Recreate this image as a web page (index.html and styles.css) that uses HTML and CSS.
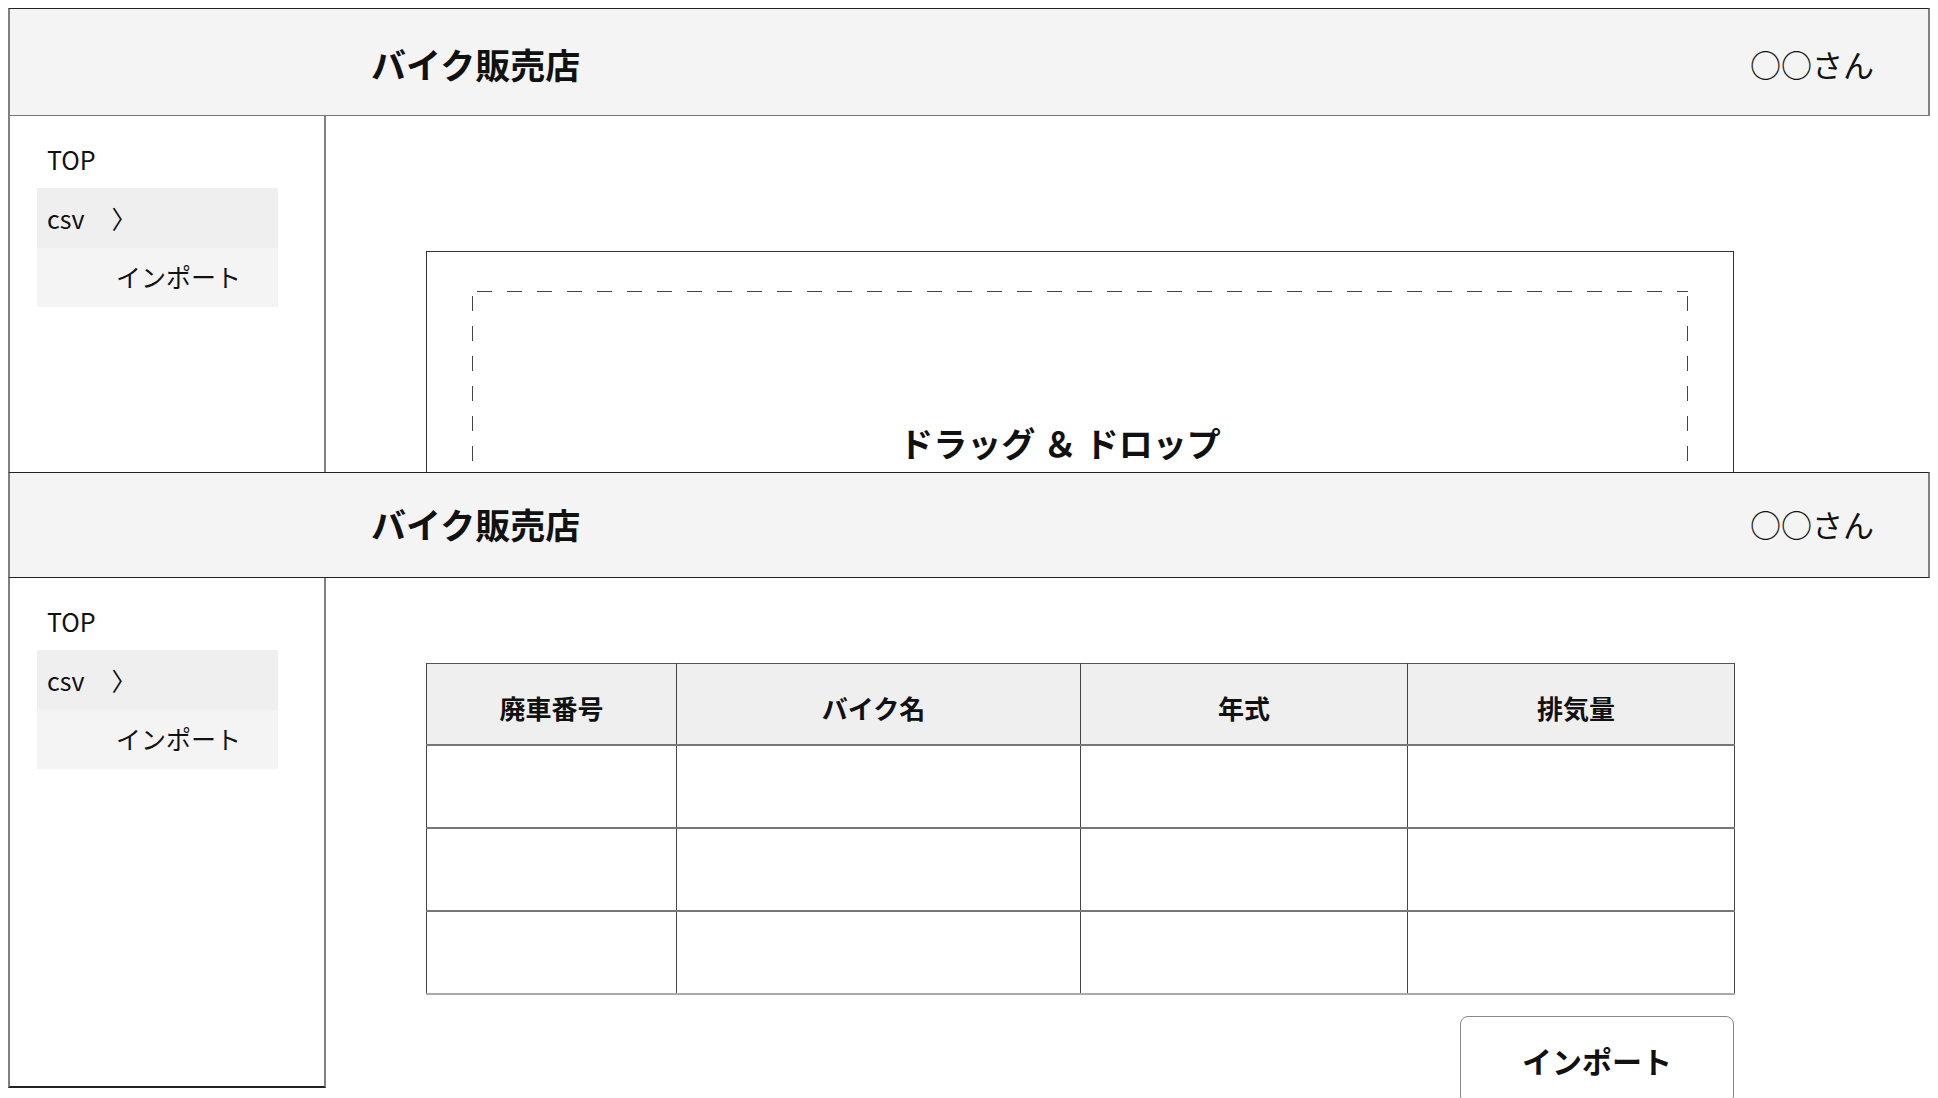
FILE: index.html
```html
<!DOCTYPE html>
<html lang="ja">
<head>
<meta charset="UTF-8">
<title>バイク販売店 CSVインポート</title>
<link rel="stylesheet" href="styles.css">
</head>
<body>
<section class="screen screen-drop">
    <header class="bar">
        <h1 class="shop">バイク販売店</h1>
        <span class="user">○○さん</span>
    </header>
    <div class="body">
        <nav class="side">
            <div class="nav-top">TOP</div>
            <div class="nav-item">csv<span class="arrow">〉</span></div>
            <div class="nav-sub">インポート</div>
        </nav>
        <main class="content">
            <div class="drop">
                <div class="drop-zone">
                    <p class="drop-text">ドラッグ ＆ ドロップ</p>
                </div>
            </div>
        </main>
    </div>
</section>
<section class="screen screen-table">
    <header class="bar bar-dark">
        <h1 class="shop">バイク販売店</h1>
        <span class="user">○○さん</span>
    </header>
    <div class="body">
        <nav class="side side-closed">
            <div class="nav-top">TOP</div>
            <div class="nav-item">csv<span class="arrow">〉</span></div>
            <div class="nav-sub">インポート</div>
        </nav>
        <main class="content">
            <div class="panel">
                <table class="grid">
                    <tr><th class="c1">廃車番号</th><th class="c2">バイク名</th><th class="c3">年式</th><th class="c4">排気量</th></tr>
                    <tr><td></td><td></td><td></td><td></td></tr>
                    <tr><td></td><td></td><td></td><td></td></tr>
                    <tr class="last"><td></td><td></td><td></td><td></td></tr>
                </table>
                <div class="actions">
                    <button class="import-btn" type="button">インポート</button>
                </div>
            </div>
        </main>
    </div>
</section>
</body>
</html>
```

FILE: styles.css
```css
body { margin: 8px 8px 0 8px; font-family: "Noto Sans CJK JP", "Noto Sans", sans-serif; color: #111; background: #fff; }

.screen-drop { height: 464px; overflow: hidden; }

.bar { display: flex; align-items: center; justify-content: space-between; box-sizing: border-box; height: 108px; padding: 3px 54px 0 361px; background: #f4f4f4; border-top: 1px solid #222; border-bottom: 1px solid #777; border-left: 2px solid #808080; border-right: 2px solid #808080; }
.bar-dark { height: 106px; padding-top: 0; padding-bottom: 4px; border-bottom-color: #222; }
.shop { margin: 0; font-size: 35px; font-weight: bold; }
.user { font-size: 31px; }

.body { display: flex; align-items: flex-start; }

.side { flex: none; width: 318px; height: 360px; box-sizing: border-box; padding-top: 25px; border-left: 2px solid #808080; border-right: 2px solid #808080; font-size: 25px; }
.side-closed { height: 510px; border-bottom: 2px solid #222; }
.nav-top { margin: 0 0 11px 27px; padding-left: 10px; line-height: 36px; }
.nav-item { width: 241px; margin-left: 27px; padding-left: 10px; box-sizing: border-box; line-height: 60px; background: #efefef; }
.arrow { margin-left: 27px; }
.nav-sub { width: 241px; margin-left: 27px; padding-left: 79px; box-sizing: border-box; line-height: 57px; padding-bottom: 2px; background: #f4f4f4; }

.content { flex: 1; }

.drop { width: 1308px; height: 330px; box-sizing: border-box; margin: 135px 0 0 100px; padding: 39px 45px 0; border: 1px solid #333; }
.drop-zone { height: 260px; padding-top: 128px; box-sizing: border-box;
    background:
        linear-gradient(90deg, #444 50%, transparent 50%) 5px 0 / 30px 1px repeat-x,
        linear-gradient(90deg, #444 50%, transparent 50%) 5px 100% / 30px 1px repeat-x,
        linear-gradient(180deg, #444 50%, transparent 50%) 0 5px / 1px 30px repeat-y,
        linear-gradient(180deg, #444 50%, transparent 50%) 100% 5px / 1px 30px repeat-y; }
.drop-text { margin: 0; padding-right: 40px; text-align: center; font-size: 34px; font-weight: bold; line-height: 1.4; }

.panel { width: 1308px; margin: 85px 0 0 100px; }
.grid { width: 1308px; border-collapse: collapse; table-layout: fixed; border-top: 1px solid #555; border-left: 1px solid #666; border-right: 1px solid #666; }
.grid th, .grid td { height: 81px; padding: 0; border-left: 1px solid #444; border-right: 1px solid #444; border-bottom: 2px solid #777; }
.grid th { padding-top: 8px; box-sizing: border-box; background: #efefef; font-size: 26px; font-weight: bold; }
.grid .last td { border-bottom-color: #aaa; }
.grid .c1 { width: 250px; }
.grid .c2 { width: 404px; padding-right: 10px; }
.grid .c3 { width: 327px; }
.grid .c4 { width: 327px; padding-left: 10px; }

.actions { display: flex; justify-content: flex-end; margin-top: 21px; }
.import-btn { width: 274px; height: 88px; border: 1px solid #888; border-radius: 8px; background: #fff; color: #111; font-family: inherit; font-size: 30px; font-weight: bold; }
```
